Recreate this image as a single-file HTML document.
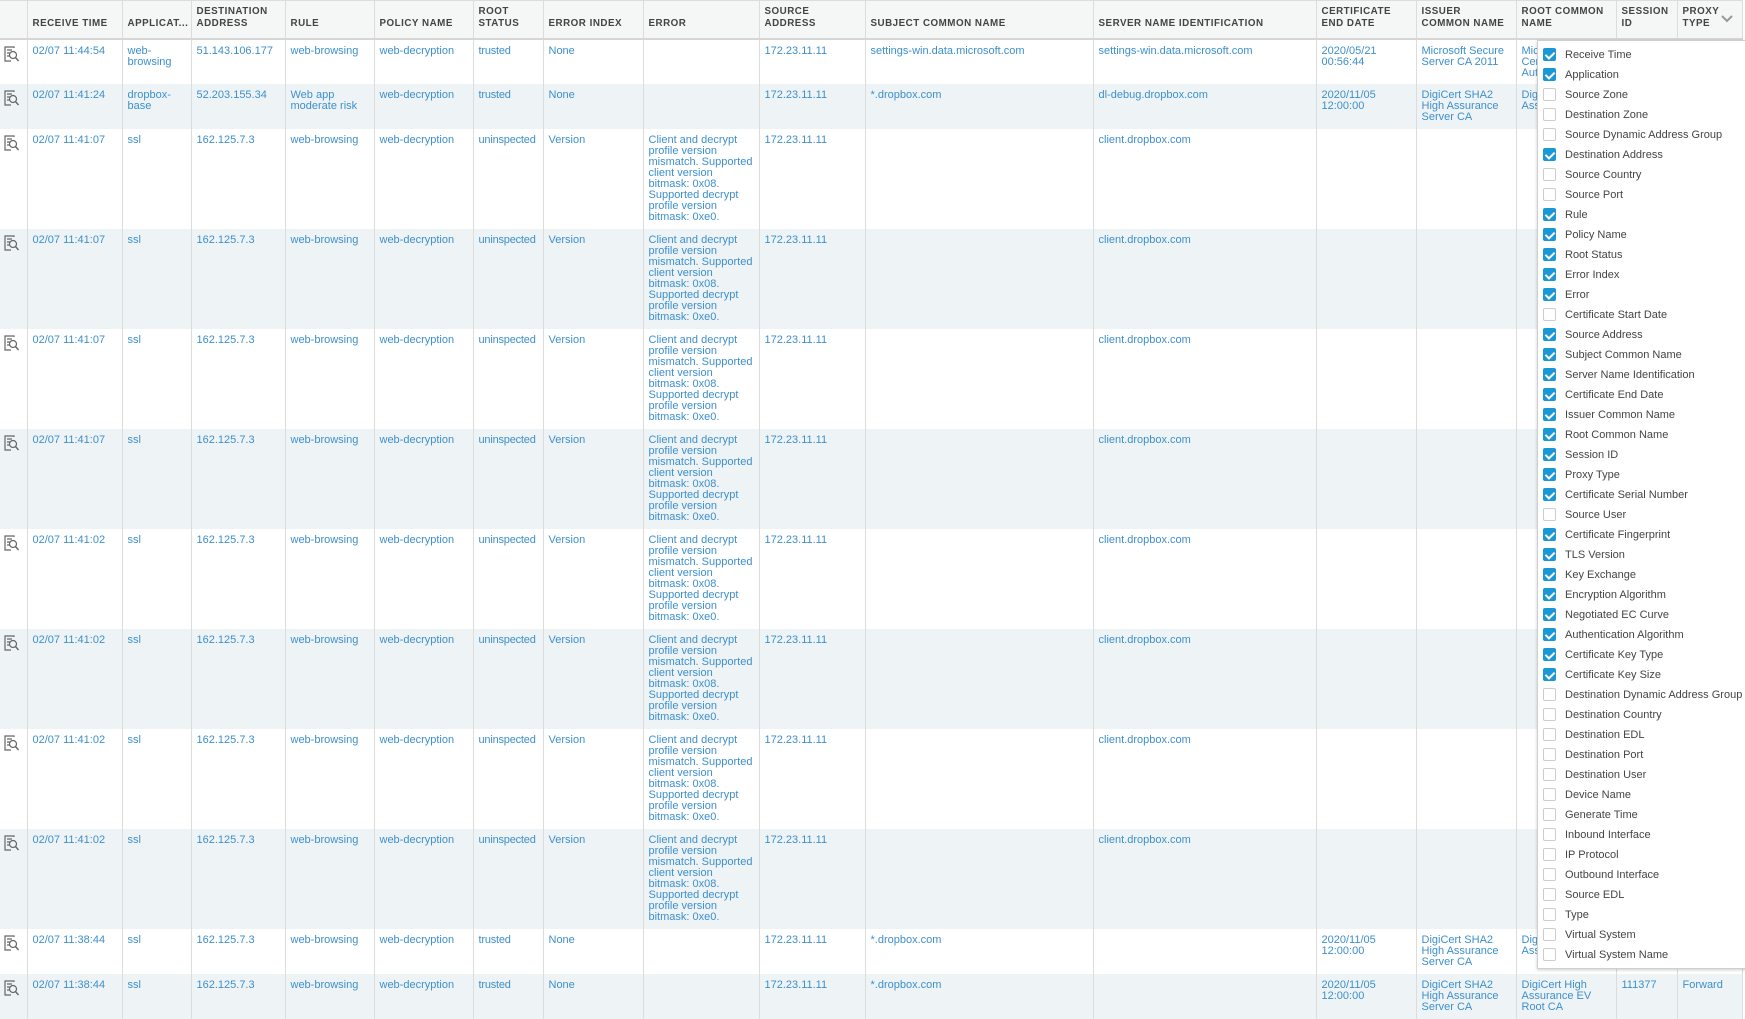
<!DOCTYPE html>
<html><head><meta charset="utf-8"><style>
*{box-sizing:border-box;margin:0;padding:0}
body{width:1745px;height:998px;overflow:hidden;background:#fff;font-family:"Liberation Sans",sans-serif;position:relative}
table{border-collapse:collapse;table-layout:fixed;width:1742px;position:absolute;left:0;top:0}
th{height:38px;background:#f5f6f6;border-right:1px solid #dcdcdc;border-bottom:2px solid #d6d6d6;border-top:1px solid #ddd;font-size:9.8px;font-weight:bold;color:#444;text-align:left;vertical-align:bottom;padding:0 5px 8px 5px;letter-spacing:.5px;line-height:12px}
td{border-right:1px solid #dcdcdc;vertical-align:top;padding:6px 5px 0 5px;font-size:11px;line-height:11px;color:#3d8fcd;word-wrap:break-word}
td:nth-child(7){white-space:nowrap;overflow:hidden;letter-spacing:-.2px}
tr.s td{height:45px}
tr.t td{height:100px}
tr.a td{background:#eef4f6}
td.i{padding:6px 0 0 4px}
.ic{width:15px;height:16px;display:block}
#p{position:absolute;left:1537px;top:40px;width:210px;height:929px;background:#fff;border:1px solid #cfcfcf;box-shadow:0 1px 3px rgba(0,0,0,.2)}
.it{position:absolute;left:5px;height:20px;font-size:11px;color:#444;line-height:20px;white-space:nowrap}
.cb{display:inline-block;width:13px;height:13px;border:1px solid #ccc;border-radius:2px;vertical-align:middle;margin-right:9px;margin-top:-2px;position:relative;background:#fff}
.cb.c{background:#1a98d5;border-color:#1a98d5}
.cb.c:after{content:"";position:absolute;left:3px;top:1px;width:4px;height:7px;border:solid #fff;border-width:0 2px 2px 0;transform:rotate(45deg)}
</style></head><body>
<table>
<colgroup><col style="width:27px"><col style="width:95px"><col style="width:69px"><col style="width:94px"><col style="width:89px"><col style="width:99px"><col style="width:70px"><col style="width:100px"><col style="width:116px"><col style="width:106px"><col style="width:228px"><col style="width:223px"><col style="width:100px"><col style="width:100px"><col style="width:100px"><col style="width:61px"><col style="width:65px"></colgroup>
<tr><th></th><th>RECEIVE TIME</th><th>APPLICAT...</th><th>DESTINATION ADDRESS</th><th>RULE</th><th>POLICY NAME</th><th>ROOT STATUS</th><th>ERROR INDEX</th><th>ERROR</th><th>SOURCE ADDRESS</th><th>SUBJECT COMMON NAME</th><th>SERVER NAME IDENTIFICATION</th><th>CERTIFICATE END DATE</th><th>ISSUER COMMON NAME</th><th>ROOT COMMON NAME</th><th>SESSION ID</th><th>PROXY TYPE</th></tr>
<tr class="s"><td class="i"><svg class="ic" viewBox="0 0 15 16"><path d="M10 2V1H1v14h6M3 4h5M3 7h3M3 10h3" fill="none" stroke="#666" stroke-width="1.2"/><circle cx="9" cy="9" r="3.5" fill="none" stroke="#666" stroke-width="1.2"/><path d="M11.5 11.5l3 3.5" stroke="#666" stroke-width="1.4"/></svg></td><td>02/07 11:44:54</td><td>web-browsing</td><td>51.143.106.177</td><td>web-browsing</td><td>web-decryption</td><td>trusted</td><td>None</td><td></td><td>172.23.11.11</td><td>settings-win.data.microsoft.com</td><td>settings-win.data.microsoft.com</td><td>2020/05/21 00:56:44</td><td>Microsoft Secure Server CA 2011</td><td>Microsoft Root Certificate Authority</td><td></td><td></td></tr>
<tr class="s a"><td class="i"><svg class="ic" viewBox="0 0 15 16"><path d="M10 2V1H1v14h6M3 4h5M3 7h3M3 10h3" fill="none" stroke="#666" stroke-width="1.2"/><circle cx="9" cy="9" r="3.5" fill="none" stroke="#666" stroke-width="1.2"/><path d="M11.5 11.5l3 3.5" stroke="#666" stroke-width="1.4"/></svg></td><td>02/07 11:41:24</td><td>dropbox-base</td><td>52.203.155.34</td><td>Web app moderate risk</td><td>web-decryption</td><td>trusted</td><td>None</td><td></td><td>172.23.11.11</td><td>*.dropbox.com</td><td>dl-debug.dropbox.com</td><td>2020/11/05 12:00:00</td><td>DigiCert SHA2 High Assurance Server CA</td><td>DigiCert High Assurance Root</td><td></td><td></td></tr>
<tr class="t"><td class="i"><svg class="ic" viewBox="0 0 15 16"><path d="M10 2V1H1v14h6M3 4h5M3 7h3M3 10h3" fill="none" stroke="#666" stroke-width="1.2"/><circle cx="9" cy="9" r="3.5" fill="none" stroke="#666" stroke-width="1.2"/><path d="M11.5 11.5l3 3.5" stroke="#666" stroke-width="1.4"/></svg></td><td>02/07 11:41:07</td><td>ssl</td><td>162.125.7.3</td><td>web-browsing</td><td>web-decryption</td><td>uninspected</td><td>Version</td><td>Client and decrypt profile version mismatch. Supported client version bitmask: 0x08. Supported decrypt profile version bitmask: 0xe0.</td><td>172.23.11.11</td><td></td><td>client.dropbox.com</td><td></td><td></td><td></td><td></td><td></td></tr>
<tr class="t a"><td class="i"><svg class="ic" viewBox="0 0 15 16"><path d="M10 2V1H1v14h6M3 4h5M3 7h3M3 10h3" fill="none" stroke="#666" stroke-width="1.2"/><circle cx="9" cy="9" r="3.5" fill="none" stroke="#666" stroke-width="1.2"/><path d="M11.5 11.5l3 3.5" stroke="#666" stroke-width="1.4"/></svg></td><td>02/07 11:41:07</td><td>ssl</td><td>162.125.7.3</td><td>web-browsing</td><td>web-decryption</td><td>uninspected</td><td>Version</td><td>Client and decrypt profile version mismatch. Supported client version bitmask: 0x08. Supported decrypt profile version bitmask: 0xe0.</td><td>172.23.11.11</td><td></td><td>client.dropbox.com</td><td></td><td></td><td></td><td></td><td></td></tr>
<tr class="t"><td class="i"><svg class="ic" viewBox="0 0 15 16"><path d="M10 2V1H1v14h6M3 4h5M3 7h3M3 10h3" fill="none" stroke="#666" stroke-width="1.2"/><circle cx="9" cy="9" r="3.5" fill="none" stroke="#666" stroke-width="1.2"/><path d="M11.5 11.5l3 3.5" stroke="#666" stroke-width="1.4"/></svg></td><td>02/07 11:41:07</td><td>ssl</td><td>162.125.7.3</td><td>web-browsing</td><td>web-decryption</td><td>uninspected</td><td>Version</td><td>Client and decrypt profile version mismatch. Supported client version bitmask: 0x08. Supported decrypt profile version bitmask: 0xe0.</td><td>172.23.11.11</td><td></td><td>client.dropbox.com</td><td></td><td></td><td></td><td></td><td></td></tr>
<tr class="t a"><td class="i"><svg class="ic" viewBox="0 0 15 16"><path d="M10 2V1H1v14h6M3 4h5M3 7h3M3 10h3" fill="none" stroke="#666" stroke-width="1.2"/><circle cx="9" cy="9" r="3.5" fill="none" stroke="#666" stroke-width="1.2"/><path d="M11.5 11.5l3 3.5" stroke="#666" stroke-width="1.4"/></svg></td><td>02/07 11:41:07</td><td>ssl</td><td>162.125.7.3</td><td>web-browsing</td><td>web-decryption</td><td>uninspected</td><td>Version</td><td>Client and decrypt profile version mismatch. Supported client version bitmask: 0x08. Supported decrypt profile version bitmask: 0xe0.</td><td>172.23.11.11</td><td></td><td>client.dropbox.com</td><td></td><td></td><td></td><td></td><td></td></tr>
<tr class="t"><td class="i"><svg class="ic" viewBox="0 0 15 16"><path d="M10 2V1H1v14h6M3 4h5M3 7h3M3 10h3" fill="none" stroke="#666" stroke-width="1.2"/><circle cx="9" cy="9" r="3.5" fill="none" stroke="#666" stroke-width="1.2"/><path d="M11.5 11.5l3 3.5" stroke="#666" stroke-width="1.4"/></svg></td><td>02/07 11:41:02</td><td>ssl</td><td>162.125.7.3</td><td>web-browsing</td><td>web-decryption</td><td>uninspected</td><td>Version</td><td>Client and decrypt profile version mismatch. Supported client version bitmask: 0x08. Supported decrypt profile version bitmask: 0xe0.</td><td>172.23.11.11</td><td></td><td>client.dropbox.com</td><td></td><td></td><td></td><td></td><td></td></tr>
<tr class="t a"><td class="i"><svg class="ic" viewBox="0 0 15 16"><path d="M10 2V1H1v14h6M3 4h5M3 7h3M3 10h3" fill="none" stroke="#666" stroke-width="1.2"/><circle cx="9" cy="9" r="3.5" fill="none" stroke="#666" stroke-width="1.2"/><path d="M11.5 11.5l3 3.5" stroke="#666" stroke-width="1.4"/></svg></td><td>02/07 11:41:02</td><td>ssl</td><td>162.125.7.3</td><td>web-browsing</td><td>web-decryption</td><td>uninspected</td><td>Version</td><td>Client and decrypt profile version mismatch. Supported client version bitmask: 0x08. Supported decrypt profile version bitmask: 0xe0.</td><td>172.23.11.11</td><td></td><td>client.dropbox.com</td><td></td><td></td><td></td><td></td><td></td></tr>
<tr class="t"><td class="i"><svg class="ic" viewBox="0 0 15 16"><path d="M10 2V1H1v14h6M3 4h5M3 7h3M3 10h3" fill="none" stroke="#666" stroke-width="1.2"/><circle cx="9" cy="9" r="3.5" fill="none" stroke="#666" stroke-width="1.2"/><path d="M11.5 11.5l3 3.5" stroke="#666" stroke-width="1.4"/></svg></td><td>02/07 11:41:02</td><td>ssl</td><td>162.125.7.3</td><td>web-browsing</td><td>web-decryption</td><td>uninspected</td><td>Version</td><td>Client and decrypt profile version mismatch. Supported client version bitmask: 0x08. Supported decrypt profile version bitmask: 0xe0.</td><td>172.23.11.11</td><td></td><td>client.dropbox.com</td><td></td><td></td><td></td><td></td><td></td></tr>
<tr class="t a"><td class="i"><svg class="ic" viewBox="0 0 15 16"><path d="M10 2V1H1v14h6M3 4h5M3 7h3M3 10h3" fill="none" stroke="#666" stroke-width="1.2"/><circle cx="9" cy="9" r="3.5" fill="none" stroke="#666" stroke-width="1.2"/><path d="M11.5 11.5l3 3.5" stroke="#666" stroke-width="1.4"/></svg></td><td>02/07 11:41:02</td><td>ssl</td><td>162.125.7.3</td><td>web-browsing</td><td>web-decryption</td><td>uninspected</td><td>Version</td><td>Client and decrypt profile version mismatch. Supported client version bitmask: 0x08. Supported decrypt profile version bitmask: 0xe0.</td><td>172.23.11.11</td><td></td><td>client.dropbox.com</td><td></td><td></td><td></td><td></td><td></td></tr>
<tr class="s"><td class="i"><svg class="ic" viewBox="0 0 15 16"><path d="M10 2V1H1v14h6M3 4h5M3 7h3M3 10h3" fill="none" stroke="#666" stroke-width="1.2"/><circle cx="9" cy="9" r="3.5" fill="none" stroke="#666" stroke-width="1.2"/><path d="M11.5 11.5l3 3.5" stroke="#666" stroke-width="1.4"/></svg></td><td>02/07 11:38:44</td><td>ssl</td><td>162.125.7.3</td><td>web-browsing</td><td>web-decryption</td><td>trusted</td><td>None</td><td></td><td>172.23.11.11</td><td>*.dropbox.com</td><td></td><td>2020/11/05 12:00:00</td><td>DigiCert SHA2 High Assurance Server CA</td><td>DigiCert High Assurance Root</td><td></td><td></td></tr>
<tr class="s a"><td class="i"><svg class="ic" viewBox="0 0 15 16"><path d="M10 2V1H1v14h6M3 4h5M3 7h3M3 10h3" fill="none" stroke="#666" stroke-width="1.2"/><circle cx="9" cy="9" r="3.5" fill="none" stroke="#666" stroke-width="1.2"/><path d="M11.5 11.5l3 3.5" stroke="#666" stroke-width="1.4"/></svg></td><td>02/07 11:38:44</td><td>ssl</td><td>162.125.7.3</td><td>web-browsing</td><td>web-decryption</td><td>trusted</td><td>None</td><td></td><td>172.23.11.11</td><td>*.dropbox.com</td><td></td><td>2020/11/05 12:00:00</td><td>DigiCert SHA2 High Assurance Server CA</td><td>DigiCert High Assurance EV Root CA</td><td>111377</td><td>Forward</td></tr>
</table>
<svg style="position:absolute;left:1720px;top:14px" width="14" height="10" viewBox="0 0 14 10"><path d="M2 2l5 5 5-5" fill="none" stroke="#999" stroke-width="2"/></svg>
<div id="p">
<div class="it" style="top:4px"><span class="cb c"></span>Receive Time</div>
<div class="it" style="top:24px"><span class="cb c"></span>Application</div>
<div class="it" style="top:44px"><span class="cb"></span>Source Zone</div>
<div class="it" style="top:64px"><span class="cb"></span>Destination Zone</div>
<div class="it" style="top:84px"><span class="cb"></span>Source Dynamic Address Group</div>
<div class="it" style="top:104px"><span class="cb c"></span>Destination Address</div>
<div class="it" style="top:124px"><span class="cb"></span>Source Country</div>
<div class="it" style="top:144px"><span class="cb"></span>Source Port</div>
<div class="it" style="top:164px"><span class="cb c"></span>Rule</div>
<div class="it" style="top:184px"><span class="cb c"></span>Policy Name</div>
<div class="it" style="top:204px"><span class="cb c"></span>Root Status</div>
<div class="it" style="top:224px"><span class="cb c"></span>Error Index</div>
<div class="it" style="top:244px"><span class="cb c"></span>Error</div>
<div class="it" style="top:264px"><span class="cb"></span>Certificate Start Date</div>
<div class="it" style="top:284px"><span class="cb c"></span>Source Address</div>
<div class="it" style="top:304px"><span class="cb c"></span>Subject Common Name</div>
<div class="it" style="top:324px"><span class="cb c"></span>Server Name Identification</div>
<div class="it" style="top:344px"><span class="cb c"></span>Certificate End Date</div>
<div class="it" style="top:364px"><span class="cb c"></span>Issuer Common Name</div>
<div class="it" style="top:384px"><span class="cb c"></span>Root Common Name</div>
<div class="it" style="top:404px"><span class="cb c"></span>Session ID</div>
<div class="it" style="top:424px"><span class="cb c"></span>Proxy Type</div>
<div class="it" style="top:444px"><span class="cb c"></span>Certificate Serial Number</div>
<div class="it" style="top:464px"><span class="cb"></span>Source User</div>
<div class="it" style="top:484px"><span class="cb c"></span>Certificate Fingerprint</div>
<div class="it" style="top:504px"><span class="cb c"></span>TLS Version</div>
<div class="it" style="top:524px"><span class="cb c"></span>Key Exchange</div>
<div class="it" style="top:544px"><span class="cb c"></span>Encryption Algorithm</div>
<div class="it" style="top:564px"><span class="cb c"></span>Negotiated EC Curve</div>
<div class="it" style="top:584px"><span class="cb c"></span>Authentication Algorithm</div>
<div class="it" style="top:604px"><span class="cb c"></span>Certificate Key Type</div>
<div class="it" style="top:624px"><span class="cb c"></span>Certificate Key Size</div>
<div class="it" style="top:644px"><span class="cb"></span>Destination Dynamic Address Group</div>
<div class="it" style="top:664px"><span class="cb"></span>Destination Country</div>
<div class="it" style="top:684px"><span class="cb"></span>Destination EDL</div>
<div class="it" style="top:704px"><span class="cb"></span>Destination Port</div>
<div class="it" style="top:724px"><span class="cb"></span>Destination User</div>
<div class="it" style="top:744px"><span class="cb"></span>Device Name</div>
<div class="it" style="top:764px"><span class="cb"></span>Generate Time</div>
<div class="it" style="top:784px"><span class="cb"></span>Inbound Interface</div>
<div class="it" style="top:804px"><span class="cb"></span>IP Protocol</div>
<div class="it" style="top:824px"><span class="cb"></span>Outbound Interface</div>
<div class="it" style="top:844px"><span class="cb"></span>Source EDL</div>
<div class="it" style="top:864px"><span class="cb"></span>Type</div>
<div class="it" style="top:884px"><span class="cb"></span>Virtual System</div>
<div class="it" style="top:904px"><span class="cb"></span>Virtual System Name</div>
</div>
</body></html>
